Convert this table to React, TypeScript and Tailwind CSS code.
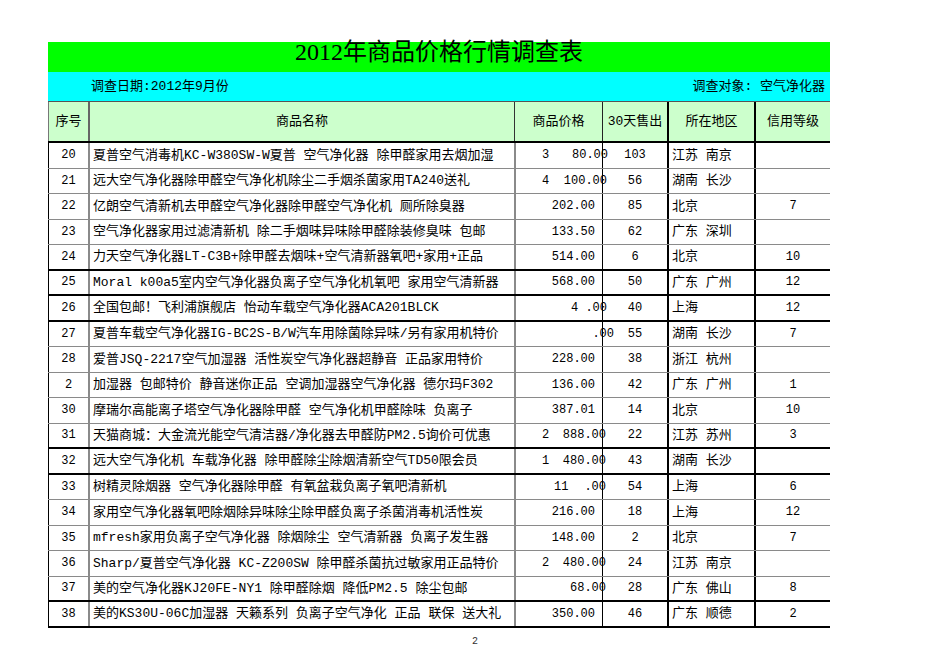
type Price = string | { lead: string; leadCls: string; val: string; overCls: string }

type Row = [string, string, Price, string, string, string, boolean]

const rows: Row[] = [
  ['20', '夏普空气消毒机KC-W380SW-W夏普 空气净化器 除甲醛家用去烟加湿', { lead: '3', leadCls: 'ml-[26px]', val: '80.00', overCls: 'mr-[-6px]' }, '103', '江苏 南京', '', false],
  ['21', '远大空气净化器除甲醛空气净化机除尘二手烟杀菌家用TA240送礼', { lead: '4', leadCls: 'ml-[26px]', val: '100.00', overCls: 'mr-[-5px]' }, '56', '湖南 长沙', '', false],
  ['22', '亿朗空气清新机去甲醛空气净化器除甲醛空气净化机 厕所除臭器', '202.00', '85', '北京', '7', false],
  ['23', '空气净化器家用过滤清新机 除二手烟味异味除甲醛除装修臭味 包邮', '133.50', '62', '广东 深圳', '', false],
  ['24', '力天空气净化器LT-C3B+除甲醛去烟味+空气清新器氧吧+家用+正品', '514.00', '6', '北京', '10', true],
  ['25', 'Moral k00a5室内空气净化器负离子空气净化机氧吧 家用空气清新器', '568.00', '50', '广东 广州', '12', true],
  ['26', '全国包邮！飞利浦旗舰店 怡动车载空气净化器ACA201BLCK', { lead: '4', leadCls: 'ml-[55px]', val: '.00', overCls: 'mr-[-5px]' }, '40', '上海', '12', true],
  ['27', '夏普车载空气净化器IG-BC2S-B/W汽车用除菌除异味/另有家用机特价', { lead: '', leadCls: '', val: '.00', overCls: 'mr-[-12px]' }, '55', '湖南 长沙', '7', false],
  ['28', '爱普JSQ-2217空气加湿器 活性炭空气净化器超静音 正品家用特价', '228.00', '38', '浙江 杭州', '', false],
  ['2', '加湿器 包邮特价 静音迷你正品 空调加湿器空气净化器 德尔玛F302', '136.00', '42', '广东 广州', '1', false],
  ['30', '摩瑞尔高能离子塔空气净化器除甲醛 空气净化机甲醛除味 负离子', '387.01', '14', '北京', '10', false],
  ['31', '天猫商城：大金流光能空气清洁器/净化器去甲醛防PM2.5询价可优惠', { lead: '2', leadCls: 'ml-[26px]', val: '888.00', overCls: 'mr-[-4px]' }, '22', '江苏 苏州', '3', true],
  ['32', '远大空气净化机 车载净化器 除甲醛除尘除烟清新空气TD50限会员', { lead: '1', leadCls: 'ml-[26px]', val: '480.00', overCls: 'mr-[-4px]' }, '43', '湖南 长沙', '', true],
  ['33', '树精灵除烟器 空气净化器除甲醛 有氧盆栽负离子氧吧清新机', { lead: '11', leadCls: 'ml-[38px]', val: '.00', overCls: 'mr-[-4px]' }, '54', '上海', '6', false],
  ['34', '家用空气净化器氧吧除烟除异味除尘除甲醛负离子杀菌消毒机活性炭', '216.00', '18', '上海', '12', false],
  ['35', 'mfresh家用负离子空气净化器 除烟除尘 空气清新器 负离子发生器', '148.00', '2', '北京', '7', false],
  ['36', 'Sharp/夏普空气净化器 KC-Z200SW 除甲醛杀菌抗过敏家用正品特价', { lead: '2', leadCls: 'ml-[26px]', val: '480.00', overCls: 'mr-[-4px]' }, '24', '江苏 南京', '', false],
  ['37', '美的空气净化器KJ20FE-NY1 除甲醛除烟 降低PM2.5 除尘包邮', { lead: '', leadCls: '', val: '68.00', overCls: 'mr-[-4px]' }, '28', '广东 佛山', '8', true],
  ['38', '美的KS30U-06C加湿器 天籁系列 负离子空气净化 正品 联保 送大礼', '350.00', '46', '广东 顺德', '2', true],
]

const cols = 'grid grid-cols-[40px_426px_88px_65px_87px_76px]'
const font = "font-['Liberation_Mono','Noto_Sans_CJK_SC',monospace]"

function PriceCell({ price }: { price: Price }) {
  if (typeof price === 'string') {
    return (
      <div className="flex items-center justify-end border-l-2 border-[#8a8a8a] pr-[7px] text-[12px]">
        {price}
      </div>
    )
  }
  return (
    <div className="relative z-10 flex items-center whitespace-nowrap border-l-2 border-[#8a8a8a] text-[12px]">
      {price.lead && <span className={price.leadCls}>{price.lead}</span>}
      <span className="flex-1" />
      <span className={price.overCls}>{price.val}</span>
    </div>
  )
}

export default function App() {
  return (
    <div className={`min-h-[672px] w-[950px] bg-white text-black ${font}`}>
      <div className="ml-[48px] w-[782px] pt-[42px]">
        <div className="flex h-[30px] items-start justify-center bg-[#00ff00] font-['Liberation_Serif','Noto_Sans_CJK_SC',serif] text-[24px] leading-[20px]">
          2012年商品价格行情调查表
        </div>
        <div className="flex h-[29px] items-center justify-between bg-[#00ffff] pl-[43px] pr-[5px] text-[13px]">
          <span>调查日期:2012年9月份</span>
          <span>调查对象: 空气净化器</span>
        </div>

        <div className={`${cols} h-[42px] border-y border-b-2 border-t-[#555] border-b-black bg-[#ccffcc] text-[13px]`}>
          <div className="flex items-center justify-center border-l border-[#777]">序号</div>
          <div className="flex items-center justify-center border-l-2 border-[#666]">商品名称</div>
          <div className="flex items-center justify-center border-l border-[#333]">商品价格</div>
          <div className="flex items-center justify-center border-l border-[#222]">30天售出</div>
          <div className="flex items-center justify-center border-l-2 border-black">所在地区</div>
          <div className="flex items-center justify-center border-l-2 border-black">信用等级</div>
        </div>

        {rows.map(([seq, name, price, sold, region, credit, thick]) => (
          <div
            key={seq + name}
            className={`${cols} h-[25.5px] text-[13px] ${thick ? 'border-b-2 border-black' : 'border-b border-[#8a8a8a]'}`}
          >
            <div className="flex items-center justify-center border-l border-black text-[12px]">{seq}</div>
            <div className="flex items-center overflow-hidden whitespace-nowrap border-l-2 border-[#8a8a8a] pl-[3px]">
              {name}
            </div>
            <PriceCell price={price} />
            <div className="flex items-center justify-center border-l border-black text-[12px]">{sold}</div>
            <div className="flex items-center border-l-2 border-black pl-[3px]">{region}</div>
            <div className="flex items-center justify-center border-l-2 border-black text-[12px]">{credit}</div>
          </div>
        ))}
      </div>
      <div className="mt-[6px] w-[950px] text-center text-[10px] text-[#333]">2</div>
    </div>
  )
}
